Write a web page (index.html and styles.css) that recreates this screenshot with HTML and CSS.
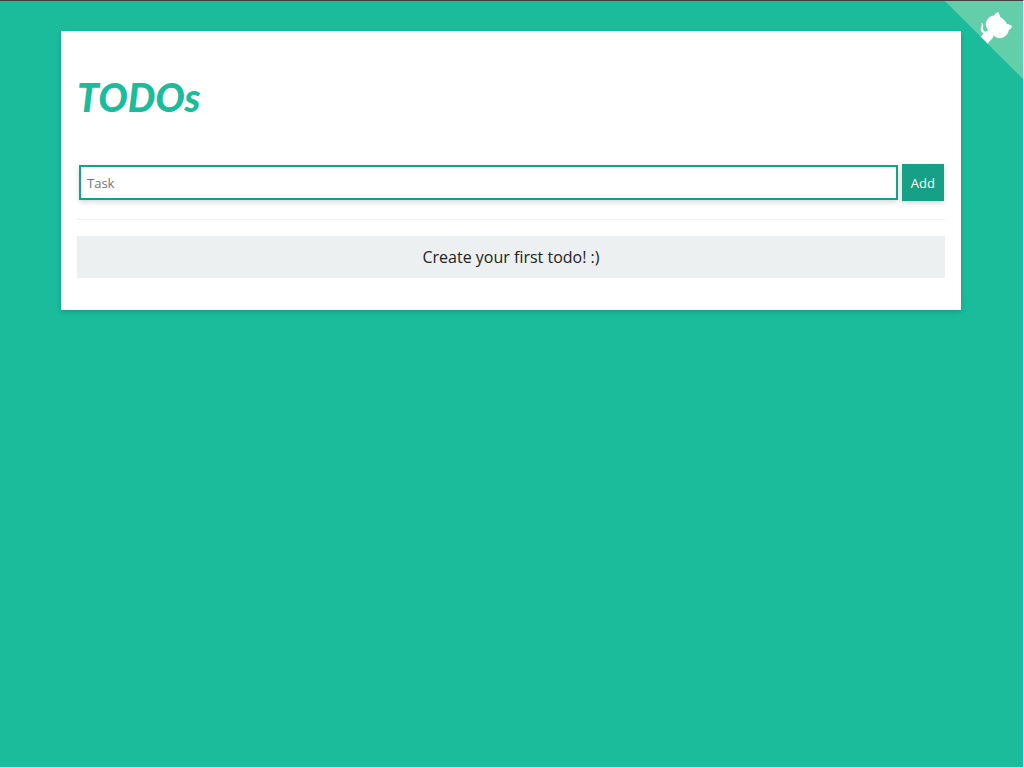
FILE: index.html
```
<!DOCTYPE html>
<html lang="en">
<head>
<meta charset="utf-8">
<title>TODOs</title>
<link rel="stylesheet" href="styles.css">
</head>
<body>
<a href="#" class="github-corner" aria-label="View source on GitHub">
<svg width="80" height="78" viewBox="0 6 250 244" aria-hidden="true"><path class="corner" d="M0,0 L115,115 L130,115 L142,142 L250,250 L250,0 Z"/><path class="cat" d="M128.3,109.0 C113.8,99.7 119.0,89.6 119.0,89.6 C122.0,82.7 120.5,78.6 120.5,78.6 C119.2,72.0 123.4,76.3 123.4,76.3 C127.3,80.9 125.5,87.3 125.5,87.3 C122.9,97.6 130.6,101.9 134.4,103.2"/><path class="cat" d="M115.0,115.0 C114.9,115.1 118.7,116.5 119.8,115.4 L133.7,101.6 C136.9,99.2 139.9,98.4 142.2,98.6 C133.8,88.0 127.5,74.4 143.8,58.0 C148.5,53.4 154.0,51.2 159.7,51.0 C160.3,49.4 163.2,43.6 171.4,40.1 C171.4,40.1 176.1,42.5 178.8,56.2 C183.1,58.6 187.2,61.8 190.9,65.4 C194.5,69.0 197.7,73.2 200.1,77.6 C213.8,80.2 216.3,84.9 216.3,84.9 C212.7,93.1 206.9,96.0 205.4,96.6 C205.1,102.4 203.0,107.8 198.3,112.5 C181.9,128.9 168.3,122.5 157.7,114.1 C157.9,116.9 156.7,120.9 152.7,124.9 L141.0,136.5 C139.8,137.7 141.6,141.9 141.8,141.8 Z"/></svg>
</a>
<main class="card">
<h1 class="title">TODOs</h1>
<form class="task-form">
<input class="task-input" type="text" placeholder="Task" aria-label="Task">
<button class="add-button" type="button">Add</button>
</form>
<hr class="divider">
<p class="empty">Create your first todo! :)</p>
</main>
</body>
</html>
```
FILE: styles.css
```
* {
  box-sizing: border-box;
}

html {
  background: #fff;
}

body {
  margin: 0;
  min-height: 100vh;
  padding: 30px 17px 30px 16px;
  border: solid #fff;
  border-width: 1px 1px 1px 0;
  border-top-color: #404040;
  background: #1abc9c;
  color: #222;
  font: 16px/26px "Open Sans", sans-serif;
}

.github-corner {
  position: absolute;
  top: 1px;
  right: 1px;
  overflow: hidden;
}

.github-corner svg {
  display: block;
}

.corner {
  fill: #64ceaa;
}

.cat {
  fill: #fff;
}

.card {
  max-width: 900px;
  margin: 0 auto;
  padding: 32px 16px;
  background: #fff;
  box-shadow: 0 2px 5px rgba(0, 0, 0, 0.16);
}

.title {
  margin: 0;
  padding: 8px 0 40px;
  color: #1abc9c;
  font: italic 900 39px/52px Lato, sans-serif;
}

.task-form {
  display: flex;
  align-items: center;
  gap: 4px;
  padding: 1px 1px 0 2px;
}

.task-input,
.add-button {
  border: 2px solid #16a085;
  border-radius: 0;
  box-shadow: 0 2px 5px rgba(0, 0, 0, 0.16);
  font: 13px/18px "Open Sans", sans-serif;
}

.task-input {
  flex: 1;
  min-width: 0;
  height: 35px;
  padding: 0 6px;
  background: #fff;
}

.task-input::placeholder {
  color: #757575;
}

.add-button {
  height: 37px;
  padding: 0 7px;
  background: #16a085;
  color: #fff;
}

.divider {
  margin: 18px 0 16px;
  border: 0;
  border-top: 1px solid #ecf0f1;
}

.empty {
  margin: 0;
  padding: 8px;
  background: #ecf0f1;
  text-align: center;
}
```
